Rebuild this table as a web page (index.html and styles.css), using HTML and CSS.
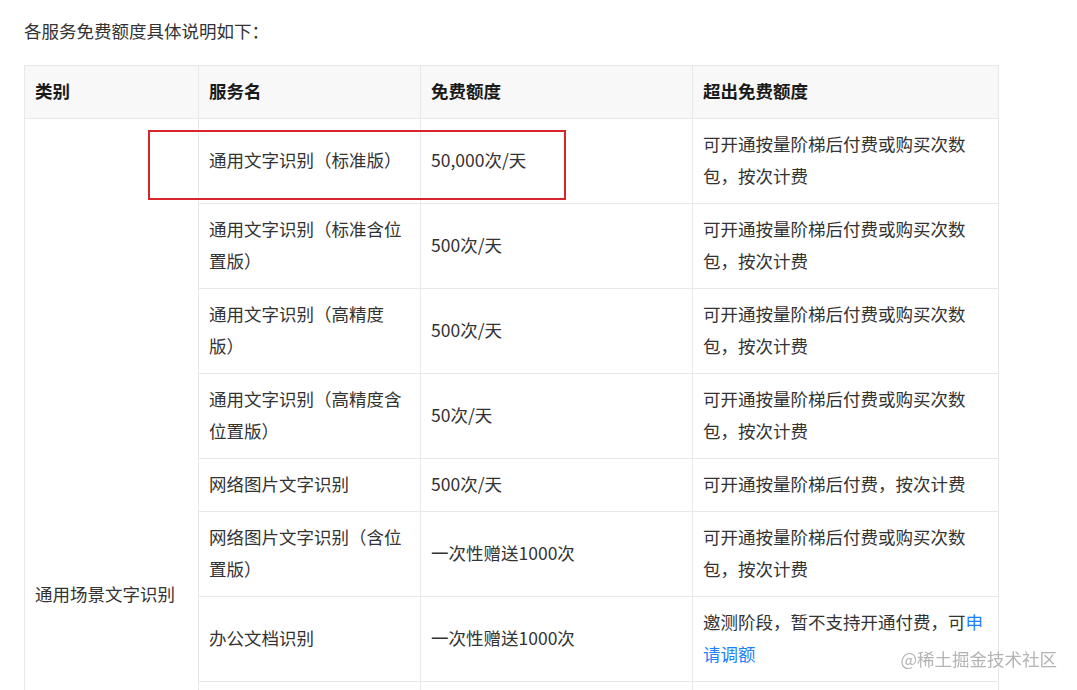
FILE: index.html
```html
<!DOCTYPE html>
<html lang="zh-CN">
<head>
<meta charset="utf-8">
<link rel="stylesheet" href="styles.css">
</head>
<body>
<div class="article">
  <p class="intro">各服务免费额度具体说明如下：</p>
  <div class="table-wrap">
    <table class="quota">
      <colgroup>
        <col class="c1"><col class="c2"><col class="c3"><col class="c4">
      </colgroup>
      <thead>
        <tr><th>类别</th><th>服务名</th><th>免费额度</th><th>超出免费额度</th></tr>
      </thead>
      <tbody>
        <tr>
          <td rowspan="12" class="cat">通用场景文字识别</td>
          <td>通用文字识别（标准版）</td><td>50,000次/天</td><td>可开通按量阶梯后付费或购买次数包，按次计费</td>
        </tr>
        <tr><td>通用文字识别（标准含位置版）</td><td>500次/天</td><td>可开通按量阶梯后付费或购买次数包，按次计费</td></tr>
        <tr><td>通用文字识别（高精度版）</td><td>500次/天</td><td>可开通按量阶梯后付费或购买次数包，按次计费</td></tr>
        <tr><td>通用文字识别（高精度含位置版）</td><td>50次/天</td><td>可开通按量阶梯后付费或购买次数包，按次计费</td></tr>
        <tr><td>网络图片文字识别</td><td>500次/天</td><td>可开通按量阶梯后付费，按次计费</td></tr>
        <tr><td>网络图片文字识别（含位置版）</td><td>一次性赠送1000次</td><td>可开通按量阶梯后付费或购买次数包，按次计费</td></tr>
        <tr><td>办公文档识别</td><td>一次性赠送1000次</td><td>邀测阶段，暂不支持开通付费，可<a href="#" class="link">申请调额</a></td></tr>
        <tr><td>手写文字识别</td><td>500次/天</td><td>可开通按量阶梯后付费或购买次数包，按次计费</td></tr>
        <tr><td>数字识别</td><td>一次性赠送1000次</td><td>可开通按量阶梯后付费或购买次数包，按次计费</td></tr>
        <tr><td>表格文字识别（同步接口）</td><td>一次性赠送1000次</td><td>可开通按量阶梯后付费或购买次数包，按次计费</td></tr>
        <tr><td>表格文字识别（异步接口）</td><td>一次性赠送1000次</td><td>可开通按量阶梯后付费或购买次数包，按次计费</td></tr>
        <tr><td>二维码识别</td><td>500次/天</td><td>可开通按量阶梯后付费，按次计费</td></tr>
      </tbody>
    </table>
    <div class="highlight"></div>
  </div>
</div>
<div class="watermark">@稀土掘金技术社区</div>
</body>
</html>
```
FILE: styles.css
```css
html, body {
  margin: 0;
  padding: 0;
  background: #ffffff;
}
body {
  font-family: "Noto Sans CJK SC", "Noto Sans", sans-serif;
  color: #333333;
  font-size: 17.5px;
  overflow: hidden;
}
.article {
  padding: 15px 0 0 24px;
}
.intro {
  margin: 0 0 18px 0;
  line-height: 32px;
  color: #333333;
}
.table-wrap {
  position: relative;
  width: 975px;
}
.quota {
  border-collapse: collapse;
  table-layout: fixed;
  width: 974px;
}
.c1 { width: 174px; }
.c2 { width: 222px; }
.c3 { width: 272px; }
.c4 { width: 306px; }
.quota th,
.quota td {
  border: 1px solid #e8e8e8;
  padding: 9px 10px 11px 10px;
  line-height: 32px;
  text-align: left;
  vertical-align: middle;
  font-size: 17.5px;
}
.quota th {
  background: #f8f8f8;
  font-weight: 700;
  color: #1a1a1a;
}
.quota td {
  color: #333333;
}
.quota td.cat {
  padding-bottom: 15px;
}
.link {
  color: #1e80ff;
  text-decoration: none;
}
.highlight {
  position: absolute;
  left: 124px;
  top: 65px;
  width: 414px;
  height: 66px;
  border: 2px solid #d8252d;
}
.watermark {
  position: fixed;
  right: 20px;
  top: 645px;
  font-size: 17.5px;
  line-height: 28px;
  color: #b4b4b4;
  text-shadow: 0 0 1px #ffffff, 0 0 1px #ffffff;
}
```
